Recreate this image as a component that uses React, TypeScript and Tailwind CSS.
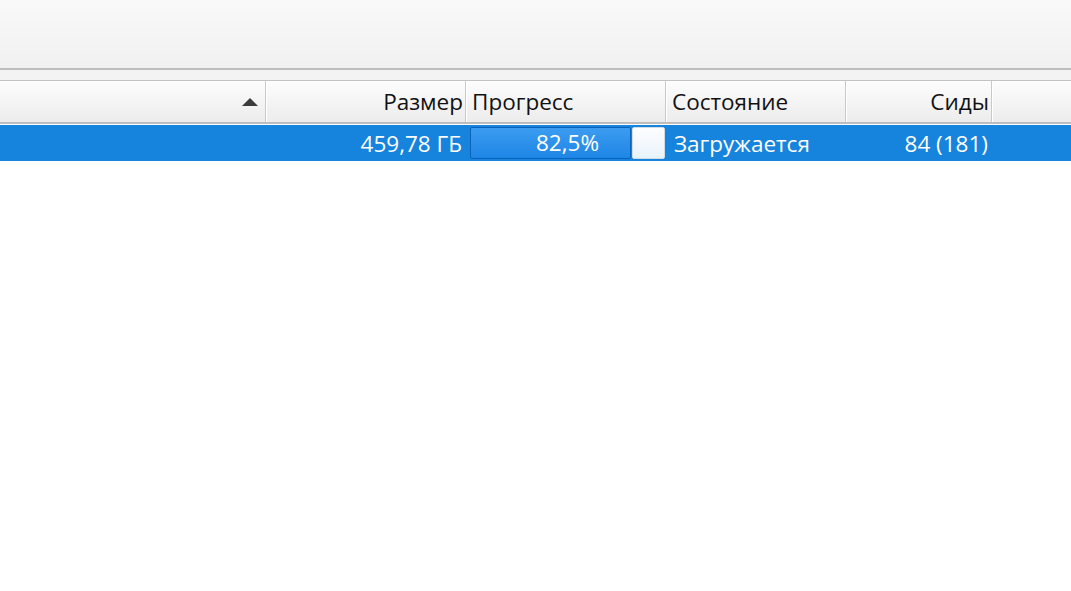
import React from 'react';

const font = { fontFamily: '"Open Sans", "Noto Sans", sans-serif' };

const HeaderCell: React.FC<{ w: string; align?: 'left' | 'right'; children?: React.ReactNode }> = ({
  w,
  align = 'left',
  children,
}) => (
  <div
    className={`${w} h-full flex items-center shrink-0 border-r border-[#c9c9c9] shadow-[1px_0_0_#ffffff] ${
      align === 'right' ? 'justify-end pr-[2px]' : 'justify-start pl-[6px]'
    }`}
  >
    {children}
  </div>
);

const App: React.FC = () => {
  return (
    <div className="w-[1071px] h-[591px] bg-white overflow-hidden text-[22.5px] leading-none" style={font}>
      {/* toolbar */}
      <div className="h-[70px] bg-gradient-to-b from-[#f9f9f9] to-[#f1f1f1] border-b-2 border-[#bcbcbc]" />
      <div className="h-[11px] bg-[#f3f3f3] border-b border-[#c3c3c3]" />

      {/* column header */}
      <div className="h-[43px] flex bg-gradient-to-b from-[#fdfdfd] to-[#ececec] border-b-2 border-[#bdbdbd] text-[#111]">
        <HeaderCell w="w-[266px]" align="right">
          <svg width="16" height="8" viewBox="0 0 16 8" className="mr-[5px] mt-[1px]">
            <path d="M0 8 L8 0 L16 8 Z" fill="#3c3c3c" />
          </svg>
        </HeaderCell>
        <HeaderCell w="w-[200px]" align="right">
          <span className="mt-[2px]">Размер</span>
        </HeaderCell>
        <HeaderCell w="w-[200px]">
          <span className="mt-[2px]">Прогресс</span>
        </HeaderCell>
        <HeaderCell w="w-[180px]">
          <span className="mt-[2px]">Состояние</span>
        </HeaderCell>
        <HeaderCell w="w-[146px]" align="right">
          <span className="mt-[2px]">Сиды</span>
        </HeaderCell>
        <div className="flex-1" />
      </div>

      {/* selected row */}
      <div className="h-[36px] mt-px flex bg-[#1683dd] text-white">
        <div className="w-[266px] shrink-0" />
        <div className="w-[200px] shrink-0 flex items-center justify-end pr-[4px] pt-[2px]">459,78 ГБ</div>
        <div className="w-[200px] shrink-0 flex items-stretch pl-[4px] pr-px py-[2px]">
          <div className="w-[161px] rounded-[2px] border border-[#0b62b8] bg-gradient-to-b from-[#3b9cf0] to-[#1d86e6] flex items-center justify-center pl-[34px]">
            82,5%
          </div>
          <div className="flex-1 ml-px rounded-[2px] border border-[#cfdbe7] bg-gradient-to-b from-[#fdfeff] to-[#e9f2fb]" />
        </div>
        <div className="w-[180px] shrink-0 flex items-center pl-[8px] pt-[2px]">Загружается</div>
        <div className="w-[146px] shrink-0 flex items-center justify-end pr-[4px] pt-[2px]">84 (181)</div>
        <div className="flex-1" />
      </div>
    </div>
  );
};

export default App;
